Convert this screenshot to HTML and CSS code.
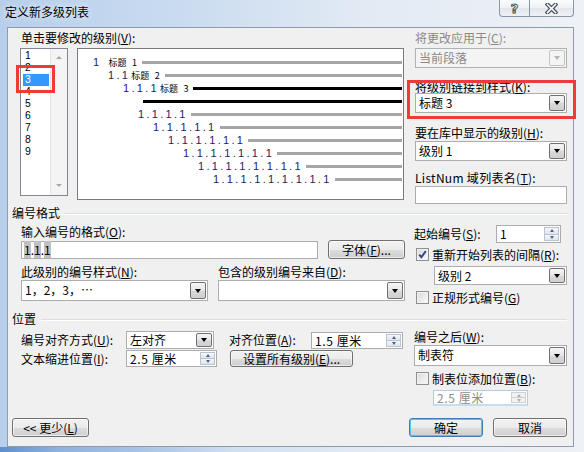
FILE: index.html
```html
<!DOCTYPE html>
<html lang="zh-CN">
<head>
    <meta charset="UTF-8">
    <title>定义新多级列表</title>
    <link rel="stylesheet" href="styles.css">
</head>
<body>
<div class="window">
    <div class="titlebar">
        <div class="title">定义新多级列表</div>
        <div class="caption">
            <span class="cap help">?</span>
            <span class="cap close">
                <svg width="13" height="11" viewBox="0 0 13 11">
                    <path d="M2.5 1.5 L10.5 9.5 M10.5 1.5 L2.5 9.5" stroke="#4a4f57" stroke-width="4" stroke-linecap="square"/>
                    <path d="M2.5 1.5 L10.5 9.5 M10.5 1.5 L2.5 9.5" stroke="#fff" stroke-width="1.6" stroke-linecap="square"/>
                </svg>
            </span>
        </div>
    </div>

    <div class="client">
        <!-- 级别列表 + 预览 -->
        <div class="top">
            <div class="levels">
                <div class="label">单击要修改的级别(<u>V</u>):</div>
                <div class="levels-row">
                    <div class="listbox">
                        <div class="items">
                            <div class="item">1</div>
                            <div class="item">2</div>
                            <div class="item sel">3</div>
                            <div class="item">4</div>
                            <div class="item">5</div>
                            <div class="item">6</div>
                            <div class="item">7</div>
                            <div class="item">8</div>
                            <div class="item">9</div>
                        </div>
                        <div class="vscroll"><span class="arr up"></span><span class="arr down"></span></div>
                    </div>
                    <div class="preview">
                        <div class="prow l1"><span class="num">1</span><span class="style">标题 1</span><span class="bar"></span></div>
                        <div class="prow l2"><span class="num">1.1</span><span class="style">标题 2</span><span class="bar"></span></div>
                        <div class="prow l3"><span class="num">1.1.1</span><span class="style">标题 3</span><span class="bar dark"></span></div>
                        <div class="prow body-text"><span class="bar dark"></span></div>
                        <div class="prow l4"><span class="num">1.1.1.1</span><span class="bar"></span></div>
                        <div class="prow l5"><span class="num">1.1.1.1.1</span><span class="bar"></span></div>
                        <div class="prow l6"><span class="num">1.1.1.1.1.1</span><span class="bar"></span></div>
                        <div class="prow l7"><span class="num">1.1.1.1.1.1.1</span><span class="bar"></span></div>
                        <div class="prow l8"><span class="num">1.1.1.1.1.1.1.1</span><span class="bar"></span></div>
                        <div class="prow l9"><span class="num">1.1.1.1.1.1.1.1.1</span><span class="bar"></span></div>
                    </div>
                </div>
            </div>

            <div class="side">
                <div class="label dis">将更改应用于(<u>C</u>):</div>
                <div class="combo disabled apply"><span class="val">当前段落</span><span class="drop"></span></div>
                <div class="label link-label">将级别链接到样式(<u>K</u>):</div>
                <div class="combo"><span class="val">标题 3</span><span class="drop"></span></div>
                <div class="label gallery-label">要在库中显示的级别(<u>H</u>):</div>
                <div class="combo gallery"><span class="val">级别 1</span><span class="drop"></span></div>
                <div class="label listnum-label">ListNum 域列表名(<u>T</u>):</div>
                <div class="textbox listnum"></div>
            </div>
        </div>

        <!-- 编号格式 -->
        <div class="group-head first"><span>编号格式</span><i></i></div>
        <div class="section fmt">
            <div class="left">
                <div class="label gap7">输入编号的格式(<u>O</u>):</div>
                <div class="row gap2">
                    <div class="textbox format"><span class="fld">1</span>.<span class="fld">1</span>.<span class="fld">1</span></div>
                    <div class="btn font-btn">字体(<u>F</u>)...</div>
                </div>
                <div class="row gap7">
                    <div class="label half">此级别的编号样式(<u>N</u>):</div>
                    <div class="label">包含的级别编号来自(<u>D</u>):</div>
                </div>
                <div class="row gap2">
                    <div class="combo tall half-combo"><span class="val">1，2，3，⋯</span><span class="drop"></span></div>
                    <div class="combo tall half-combo second"><span class="val"></span><span class="drop"></span></div>
                </div>
            </div>
            <div class="right">
                <div class="row start-row">
                    <div class="label">起始编号(<u>S</u>):</div>
                    <div class="spin start"><span class="val">1</span><span class="btns"><i class="up"></i><i class="dn"></i></span></div>
                </div>
                <div class="row check-row restart">
                    <span class="check on">
                        <svg width="11" height="11" viewBox="0 0 11 11"><path d="M2.2 5.6 L4.4 8.2 L8.8 2.2" fill="none" stroke="#2c4a8c" stroke-width="2"/></svg>
                    </span>
                    <span class="label">重新开始列表的间隔(<u>R</u>):</span>
                </div>
                <div class="combo restart-combo"><span class="val">级别 2</span><span class="drop"></span></div>
                <div class="row check-row legal">
                    <span class="check"></span>
                    <span class="label">正规形式编号(<u>G</u>)</span>
                </div>
            </div>
        </div>

        <!-- 位置 -->
        <div class="group-head"><span>位置</span><i></i></div>
        <div class="section pos">
            <div class="left">
                <div class="row pos-row1">
                    <div class="label col-label">编号对齐方式(<u>U</u>):</div>
                    <div class="combo align"><span class="val">左对齐</span><span class="drop"></span></div>
                    <div class="label at-label">对齐位置(<u>A</u>):</div>
                    <div class="spin at"><span class="val">1.5 厘米</span><span class="btns"><i class="up"></i><i class="dn"></i></span></div>
                </div>
                <div class="row pos-row2">
                    <div class="label col-label">文本缩进位置(<u>I</u>):</div>
                    <div class="spin indent"><span class="val">2.5 厘米</span><span class="btns"><i class="up"></i><i class="dn"></i></span></div>
                    <div class="btn all-btn">设置所有级别(<u>E</u>)...</div>
                </div>
            </div>
            <div class="right">
                <div class="label gap6">编号之后(<u>W</u>):</div>
                <div class="combo tall follow"><span class="val">制表符</span><span class="drop"></span></div>
                <div class="row check-row tabstop">
                    <span class="check"></span>
                    <span class="label">制表位添加位置(<u>B</u>):</span>
                </div>
                <div class="spin disabled tab-at"><span class="val">2.5 厘米</span><span class="btns"><i class="up"></i><i class="dn"></i></span></div>
            </div>
        </div>

        <div class="footer">
            <div class="btn less">&lt;&lt; 更少(<u>L</u>)</div>
            <div class="btn ok default">确定</div>
            <div class="btn cancel">取消</div>
        </div>

        <!-- 红色标注框 -->
        <div class="mark mark-level"></div>
        <div class="mark mark-style"></div>
    </div>
</div>
</body>
</html>
```

FILE: styles.css
```css
* {
    box-sizing: border-box;
}
html, body {
    margin: 0;
}
body {
    width: 584px;
    height: 452px;
    overflow: hidden;
    font-family: "Noto Sans CJK SC", "Noto Sans", sans-serif;
    font-size: 12px;
    color: #000;
    background: #fff;
}
u {
    text-decoration: underline;
    text-underline-offset: 1px;
}

/* 窗口框架 */
.window {
    width: 584px;
    height: 452px;
    display: flex;
    flex-direction: column;
    background:
        linear-gradient(to right, #5f8fcf 0, #8fb2df 10%, rgba(220, 232, 245, 0) 40%) left bottom / 100% 5px no-repeat,
        linear-gradient(to right, #b7cfeb 0%, #c9dbf0 30%, #e2eaf4 62%, #eef1f5 100%);
}
.titlebar {
    height: 27px;
    flex-shrink: 0;
    display: flex;
    align-items: flex-start;
}
.title {
    padding: 4px 0 0 5px;
    line-height: 16px;
    text-shadow: 0 0 6px #fff;
}
.caption {
    margin-left: auto;
    margin-right: 10px;
    display: flex;
}
.cap {
    height: 17px;
    border: 1px solid #8a97a8;
    border-top: none;
    background: linear-gradient(#fbfcfd, #eef1f5 50%, #e1e6ed 51%, #eef1f5);
    display: flex;
    align-items: center;
    justify-content: center;
}
.help {
    width: 30px;
    border-right: none;
    border-radius: 0 0 0 4px;
    font-family: "DejaVu Sans", sans-serif;
    font-weight: bold;
    font-size: 13px;
    color: #fff;
    -webkit-text-stroke: 1px #4a4f57;
}
.close {
    width: 45px;
    border-radius: 0 0 4px 0;
}

/* 客户区 */
.client {
    position: relative;
    margin-left: 7px;
    width: 567px;
    height: 420px;
    border: 1px solid #8e9bad;
    background: #f0f0f0;
}
.label {
    height: 12px;
    line-height: 12px;
    white-space: nowrap;
}
.label.dis {
    color: #8a8a8a;
}
.row {
    display: flex;
    align-items: center;
}
.gap2 { margin-top: 2px; }
.gap6 { margin-top: 6px; }
.gap7 { margin-top: 7px; }

.top {
    display: flex;
    padding: 4px 0 0 12px;
    height: 176px;
}
.levels .label {
    padding-left: 1px;
}
.levels-row {
    display: flex;
    margin-top: 4px;
}
.listbox {
    width: 48px;
    height: 148px;
    border: 1px solid #828790;
    background: #fff;
    display: flex;
}
.items {
    flex: 1;
    padding: 1px 0 0 2px;
}
.item {
    width: 26px;
    height: 12px;
    line-height: 12px;
    font-family: "Liberation Sans", sans-serif;
    font-size: 10.4px;
    padding-left: 2px;
}
.item.sel {
    background: #3399ff;
    color: #fff;
}
.vscroll {
    width: 17px;
    background: #f4f4f4;
    border-left: 1px solid #e6e6e6;
    display: flex;
    flex-direction: column;
    justify-content: space-between;
    align-items: center;
    padding: 7px 0 8px;
}
.arr {
    width: 0;
    height: 0;
    border-left: 3px solid transparent;
    border-right: 3px solid transparent;
}
.arr.up { border-bottom: 3px solid #a9a9a9; }
.arr.down { border-top: 3px solid #a9a9a9; }

.preview {
    width: 327px;
    height: 152px;
    margin-left: 9px;
    border: 1px solid #7b7b7b;
    background: #fff;
    padding: 7px 1px 0 0;
}
.prow {
    display: flex;
    align-items: center;
    height: 13px;
}
.num {
    color: #1d2466;
    font-family: "Liberation Sans", sans-serif;
    font-size: 11px;
    letter-spacing: 2.3px;
    line-height: 13px;
    white-space: nowrap;
}
.style {
    font-size: 9px;
    word-spacing: 3.5px;
    line-height: 13px;
    white-space: nowrap;
}
.bar {
    flex: 1;
    height: 3px;
    margin-left: 3px;
    background: #a6a6a6;
}
.bar.dark {
    background: #000;
}
.l1 { padding-left: 15px; }
.l2 { padding-left: 30px; }
.l3 { padding-left: 45px; }
.body-text { padding-left: 65px; }
.l4 { padding-left: 60px; }
.l5 { padding-left: 75px; }
.l6 { padding-left: 90px; }
.l7 { padding-left: 105px; }
.l8 { padding-left: 120px; }
.l9 { padding-left: 135px; }
.l1 .style { margin-left: 7px; }
.l2 .style, .l3 .style { margin-left: 1px; }
.l1 .bar, .l2 .bar, .l3 .bar { margin-left: 5px; }
.body-text .bar { margin-left: 0; }

.side {
    width: 152px;
    margin-left: 11px;
}
.apply { margin-top: 4px; }
.link-label { margin-top: 13px; }
.gallery-label { margin-top: 14px; }
.gallery { margin-top: 2px; }
.listnum-label {
    margin-top: 11px;
    letter-spacing: 0.3px;
}
.listnum {
    margin-top: 2px;
}

/* 控件 */
.combo {
    display: flex;
    height: 20px;
    border: 1px solid #abadb3;
    background: #fff;
}
.combo.tall {
    height: 21px;
}
.combo .val {
    flex: 1;
    padding-left: 3px;
    line-height: 18px;
    white-space: nowrap;
}
.drop {
    width: 16px;
    margin: 1px;
    border: 1px solid #707070;
    border-radius: 2px;
    background: linear-gradient(#f6f6f6, #e6e6e6 50%, #d8d8d8 51%, #d0d0d0);
    display: flex;
    align-items: center;
    justify-content: center;
}
.drop::after {
    content: "";
    border-left: 3.5px solid transparent;
    border-right: 3.5px solid transparent;
    border-top: 4px solid #000;
}
.combo.disabled {
    border-color: #adb2b5;
    background: #f4f4f4;
    color: #8a8a8a;
}
.combo.disabled .drop {
    border-color: #c5c5c5;
    background: #f4f4f4;
}
.combo.disabled .drop::after {
    border-top-color: #b5b5b5;
}
.textbox {
    height: 18px;
    border: 1px solid #abadb3;
    background: #fff;
}
.spin {
    display: flex;
    height: 18px;
    border: 1px solid #abadb3;
    background: #fff;
}
.spin .val {
    flex: 1;
    padding-left: 3px;
    line-height: 16px;
    letter-spacing: 0.6px;
    white-space: nowrap;
}
.spin .btns {
    width: 15px;
    margin: 1px;
    display: flex;
    flex-direction: column;
}
.spin .btns i {
    flex: 1;
    border: 1px solid #b9c4d2;
    background: linear-gradient(#f5f7fa, #dfe5ec);
    display: flex;
    align-items: center;
    justify-content: center;
}
.spin .btns i + i {
    border-top: none;
}
.spin .btns .up::after {
    content: "";
    border-left: 2.5px solid transparent;
    border-right: 2.5px solid transparent;
    border-bottom: 3px solid #4f6186;
}
.spin .btns .dn::after {
    content: "";
    border-left: 2.5px solid transparent;
    border-right: 2.5px solid transparent;
    border-top: 3px solid #4f6186;
}
.spin.disabled {
    border-color: #b4cbe4;
    border-bottom: 2px solid #c7dcf2;
    color: #8d8d8d;
}
.spin.disabled .btns i {
    border-color: #d0d0d0;
    background: #f2f2f2;
}
.spin.disabled .btns .up::after { border-bottom-color: #b0b0b0; }
.spin.disabled .btns .dn::after { border-top-color: #b0b0b0; }

.check {
    width: 13px;
    height: 13px;
    border: 1px solid #8e8f8f;
    background: linear-gradient(135deg, #d9d9d9, #fbfbfb);
    box-shadow: inset 0 0 0 1px #f3f3f3;
    display: flex;
    align-items: center;
    justify-content: center;
}
.btn {
    height: 19px;
    border: 1px solid #707070;
    border-radius: 3px;
    background: linear-gradient(#f2f2f2 0%, #ebebeb 50%, #dddddd 51%, #cfcfcf 100%);
    box-shadow: inset 0 0 0 1px rgba(255, 255, 255, 0.6);
    text-align: center;
    line-height: 17px;
    white-space: nowrap;
}
.btn.default {
    border-color: #3c7fb1;
    box-shadow: inset 0 0 0 1px #54c5ee;
}

/* 分组 */
.group-head {
    display: flex;
    align-items: center;
    height: 12px;
    line-height: 12px;
    margin: 9px 6px 0 4px;
}
.group-head.first {
    margin-top: 3px;
}
.group-head i {
    flex: 1;
    height: 1px;
    margin-left: 5px;
    background: #d5dfe5;
    box-shadow: 0 1px 0 #fff;
}
.section {
    display: flex;
    padding-left: 13px;
}
.section .left {
    width: 384px;
}
.section .right {
    width: 153px;
    margin-left: 9px;
}

.format {
    width: 297px;
    padding: 0 0 0 2px;
    line-height: 16px;
}
.fld {
    background: #c0c0c0;
}
.font-btn {
    width: 77px;
    margin-left: 10px;
}
.label.half {
    width: 197px;
}
.half-combo {
    width: 187px;
}
.half-combo.second {
    margin-left: 10px;
}
.start-row {
    margin-top: 6px;
    height: 18px;
    justify-content: space-between;
    padding-right: 6px;
}
.spin.start {
    width: 65px;
}
.check-row {
    height: 13px;
}
.check-row .check {
    margin-left: 2px;
}
.check-row .label {
    margin-left: 3px;
}
.restart { margin-top: 5px; }
.restart-combo {
    margin: 5px 0 0 20px;
    height: 19px;
}
.restart-combo .val {
    line-height: 17px;
}
.legal { margin-top: 6px; }

.pos-row1 {
    margin-top: 6px;
    height: 18px;
}
.pos-row2 {
    margin-top: 1px;
    height: 17px;
}
.col-label {
    width: 105px;
}
.combo.align {
    width: 88px;
    height: 18px;
}
.combo.align .val {
    line-height: 16px;
}
.at-label {
    width: 82px;
    margin-left: 15px;
}
.spin.at {
    width: 92px;
    height: 17px;
}
.spin.indent {
    width: 91px;
    height: 17px;
}
.all-btn {
    width: 123px;
    height: 17px;
    line-height: 15px;
    margin-left: 13px;
}
.follow {
    margin-top: 2px;
}
.tabstop { margin-top: 6px; }
.tab-at {
    width: 95px;
    height: 16px;
    margin: 5px 0 0 19px;
}
.tab-at .val {
    line-height: 13px;
}

.footer {
    display: flex;
    margin-top: 12px;
    padding-left: 4px;
}
.less {
    width: 77px;
}
.ok {
    width: 74px;
    margin-left: auto;
}
.cancel {
    width: 74px;
    margin: 0 6px 0 10px;
}

/* 红色标注框 */
.mark {
    position: absolute;
    border: 3px solid #ef3a3a;
}
.mark-level {
    left: 8px;
    top: 37px;
    width: 39px;
    height: 28px;
}
.mark-style {
    left: 399px;
    top: 52px;
    width: 169px;
    height: 39px;
}
```
